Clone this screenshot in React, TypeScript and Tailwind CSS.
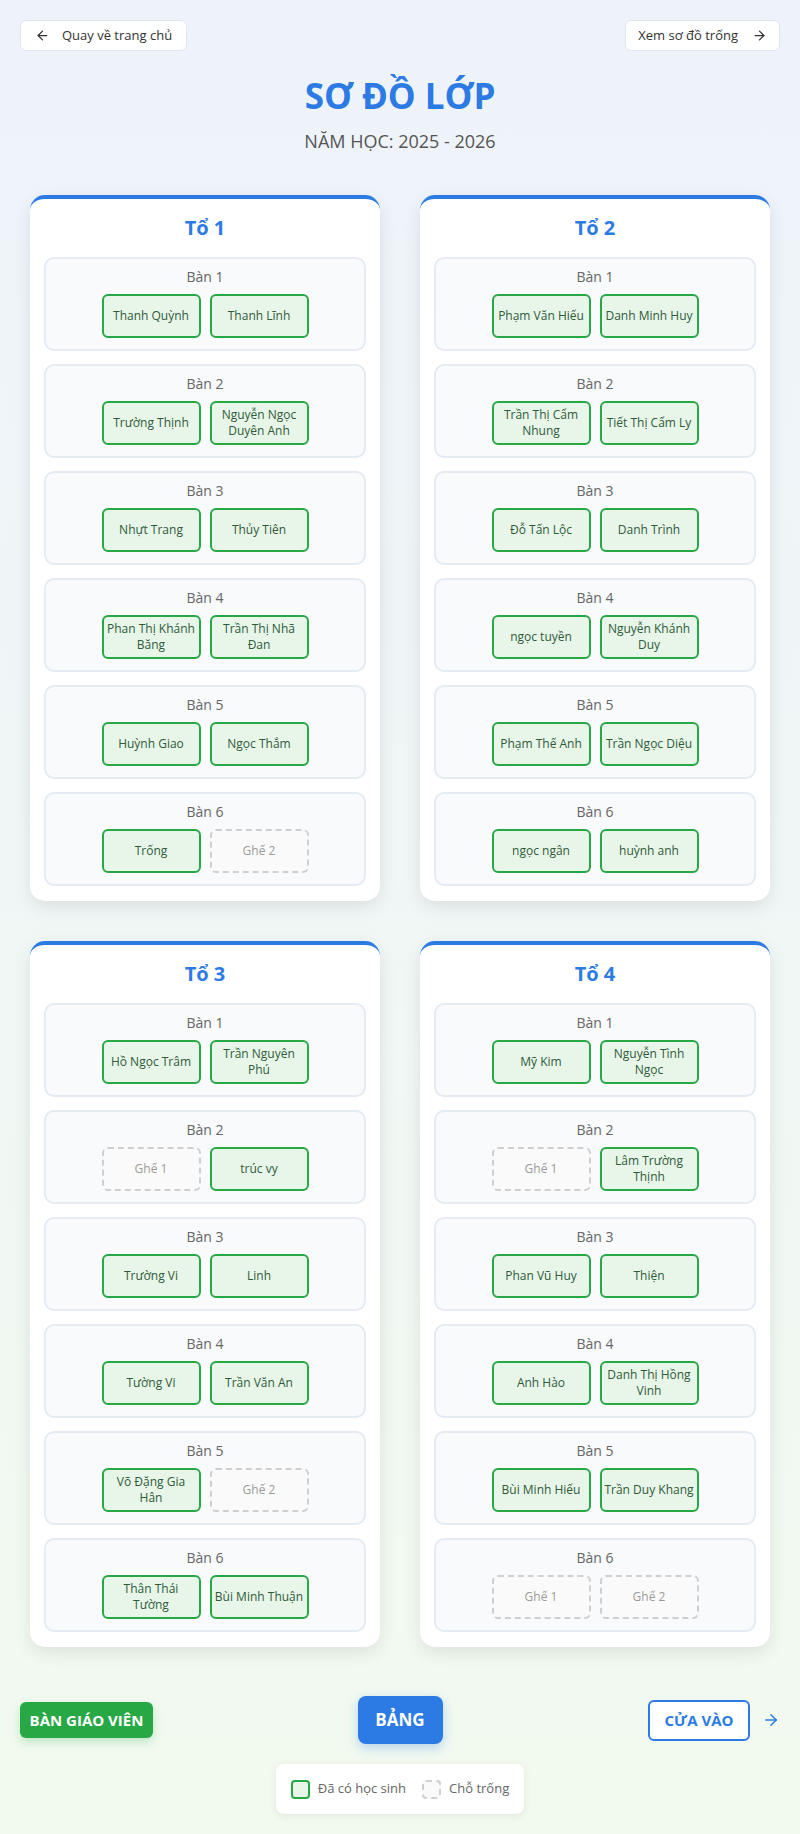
import { ArrowLeft, ArrowRight } from "lucide-react"

type Seat = string | null

const groups: { name: string; desks: [Seat, Seat][] }[] = [
  {
    name: "Tổ 1",
    desks: [
      ["Thanh Quỳnh", "Thanh Lĩnh"],
      ["Trường Thịnh", "Nguyễn Ngọc Duyên Anh"],
      ["Nhựt Trang", "Thủy Tiên"],
      ["Phan Thị Khánh Băng", "Trần Thị Nhã Đan"],
      ["Huỳnh Giao", "Ngọc Thắm"],
      ["Trống", null],
    ],
  },
  {
    name: "Tổ 2",
    desks: [
      ["Phạm Văn Hiếu", "Danh Minh Huy"],
      ["Trần Thị Cẩm Nhung", "Tiết Thị Cẩm Ly"],
      ["Đỗ Tấn Lộc", "Danh Trình"],
      ["ngọc tuyền", "Nguyễn Khánh Duy"],
      ["Phạm Thế Anh", "Trần Ngọc Diệu"],
      ["ngọc ngân", "huỳnh anh"],
    ],
  },
  {
    name: "Tổ 3",
    desks: [
      ["Hồ Ngọc Trâm", "Trần Nguyên Phú"],
      [null, "trúc vy"],
      ["Trường Vi", "Linh"],
      ["Tường Vi", "Trần Văn An"],
      ["Võ Đặng Gia Hân", null],
      ["Thân Thái Tường", "Bùi Minh Thuận"],
    ],
  },
  {
    name: "Tổ 4",
    desks: [
      ["Mỹ Kim", "Nguyễn Tình Ngọc"],
      [null, "Lâm Trường Thịnh"],
      ["Phan Vũ Huy", "Thiện"],
      ["Anh Hào", "Danh Thị Hồng Vinh"],
      ["Bùi Minh Hiếu", "Trần Duy Khang"],
      [null, null],
    ],
  },
]

function SeatBox({ name, index }: { name: Seat; index: number }) {
  if (name === null) {
    return (
      <div className="w-[99px] h-[44px] flex items-center justify-center rounded-md border-2 border-dashed border-[#cfcfcf] bg-[#fafafa] text-[12px] text-[#9a9a9a]">
        Ghế {index + 1}
      </div>
    )
  }
  return (
    <div className="w-[99px] h-[44px] flex items-center justify-center px-[1px] rounded-md border-2 border-[#28a745] bg-[#e8f5e9] text-center text-[12px] leading-[16px] text-[#2e5b3a] font-medium">
      {name}
    </div>
  )
}

export default function App() {
  return (
    <div
      className="min-h-screen bg-gradient-to-b from-[#eef3fb] to-[#f2faef] px-5 pt-5 pb-5 text-[#333]"
      style={{ fontFamily: '"Open Sans", "Noto Sans", sans-serif' }}
    >
      {/* Top buttons */}
      <div className="flex justify-between">
        <button className="h-[31px] flex items-center gap-[12px] pl-[14px] pr-[14px] bg-white rounded-md border border-[#e3e6eb] text-[13px] text-[#333]">
          <ArrowLeft size={15} strokeWidth={2} />
          Quay về trang chủ
        </button>
        <button className="h-[31px] flex items-center gap-[14px] pl-3 pr-3 bg-white rounded-md border border-[#e3e6eb] text-[13px] text-[#333]">
          Xem sơ đồ trống
          <ArrowRight size={15} strokeWidth={2} />
        </button>
      </div>

      {/* Title */}
      <h1 className="mt-[23px] text-center text-[35px] leading-[44px] font-bold text-[#2c7be5]">SƠ ĐỒ LỚP</h1>
      <p className="mt-[10px] text-center text-[18px] leading-[26px] text-[#555] font-medium">NĂM HỌC: 2025 - 2026</p>

      {/* Groups */}
      <div className="mt-[41px] px-[10px] grid grid-cols-2 gap-x-10 gap-y-10">
        {groups.map((g) => (
          <div
            key={g.name}
            className="bg-white rounded-[15px] border-t-4 border-[#2c7be5] px-[14px] pt-[15px] pb-[15px] shadow-[0_6px_18px_rgba(0,0,0,0.09)]"
          >
            <h2 className="text-center text-[20px] leading-[28px] font-bold text-[#2c7be5] mb-[15px]">{g.name}</h2>
            <div className="flex flex-col gap-[13px]">
              {g.desks.map((d, i) => (
                <div
                  key={i}
                  className="h-[94px] rounded-[10px] border-2 border-[#e4ebf3] bg-[#f8fafc] pt-[8px] flex flex-col items-center"
                >
                  <div className="text-[14px] leading-[20px] text-[#666] mb-[7px]">Bàn {i + 1}</div>
                  <div className="flex gap-[9px]">
                    <SeatBox name={d[0]} index={0} />
                    <SeatBox name={d[1]} index={1} />
                  </div>
                </div>
              ))}
            </div>
          </div>
        ))}
      </div>

      {/* Bottom */}
      <div className="mt-[49px] flex items-center">
        <div className="flex-1 flex justify-start">
          <div className="w-[133px] h-[36px] flex items-center justify-center rounded-md bg-[#28a745] text-white text-[15px] font-bold shadow-[0_4px_10px_rgba(40,167,69,0.25)]">
            BÀN GIÁO VIÊN
          </div>
        </div>
        <div className="w-[85px] h-[48px] flex items-center justify-center rounded-lg bg-[#2c7be5] text-white text-[17px] font-bold shadow-[0_4px_12px_rgba(44,123,229,0.3)]">
          BẢNG
        </div>
        <div className="flex-1 flex justify-end items-center gap-[12px]">
          <div className="w-[102px] h-[41px] flex items-center justify-center rounded-md border-2 border-[#2c7be5] bg-white text-[#2c7be5] text-[15px] font-bold">
            CỬA VÀO
          </div>
          <ArrowRight size={18} strokeWidth={2} className="text-[#2c7be5]" />
        </div>
      </div>

      <div className="mt-[20px] flex justify-center">
        <div className="h-[50px] flex items-center gap-[16px] px-[15px] bg-white rounded-lg shadow-[0_2px_8px_rgba(0,0,0,0.07)] text-[13px] text-[#666]">
          <div className="flex items-center gap-[8px]">
            <div className="w-[19px] h-[19px] rounded-[4px] border-2 border-[#28a745] bg-[#e8f5e9]" />
            Đã có học sinh
          </div>
          <div className="flex items-center gap-[8px]">
            <div className="w-[19px] h-[19px] rounded-[4px] border-2 border-dashed border-[#cfcfcf] bg-[#fafafa]" />
            Chỗ trống
          </div>
        </div>
      </div>
    </div>
  )
}
